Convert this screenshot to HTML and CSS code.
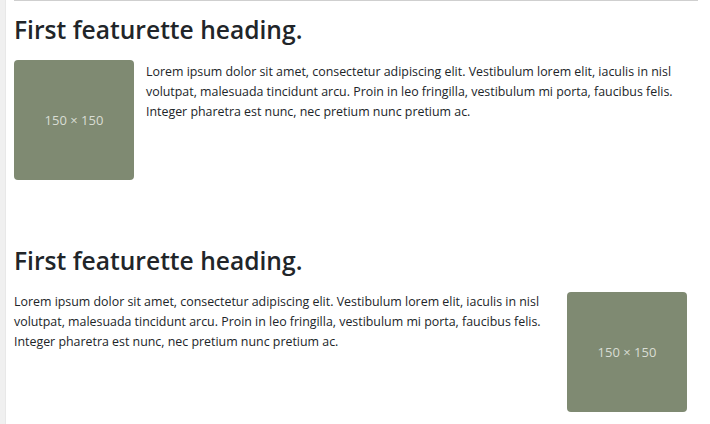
FILE: index.html
```html
<!DOCTYPE html>
<html>
<head>
<meta charset="utf-8">
<link rel="stylesheet" href="styles.css">
</head>
<body>
<div class="page">
  <hr class="divider">
  <section class="featurette">
    <h2 class="heading">First featurette heading.</h2>
    <div class="row">
      <div class="thumb">150 × 150</div>
      <p class="text">Lorem ipsum dolor sit amet, consectetur adipiscing elit. Vestibulum lorem elit, iaculis in nisl volutpat, malesuada tincidunt arcu. Proin in leo fringilla, vestibulum mi porta, faucibus felis. Integer pharetra est nunc, nec pretium nunc pretium ac.</p>
    </div>
  </section>
  <section class="featurette second">
    <h2 class="heading">First featurette heading.</h2>
    <div class="row right">
      <p class="text">Lorem ipsum dolor sit amet, consectetur adipiscing elit. Vestibulum lorem elit, iaculis in nisl volutpat, malesuada tincidunt arcu. Proin in leo fringilla, vestibulum mi porta, faucibus felis. Integer pharetra est nunc, nec pretium nunc pretium ac.</p>
      <div class="thumb">150 × 150</div>
    </div>
  </section>
</div>
</body>
</html>
```
FILE: styles.css
```css
html, body {
  margin: 0;
  padding: 0;
  background: #fff;
}
body {
  font-family: "Open Sans", "Noto Sans", sans-serif;
  color: #212529;
  width: 710px;
  height: 424px;
  overflow: hidden;
}
.page {
  border-left: 5px solid #f0f0f0;
  box-shadow: inset 1px 0 0 #e8e8e8;
  padding: 0 12px 0 9px;
  height: 424px;
  box-sizing: border-box;
}
.divider {
  margin: 0;
  border: 0;
  border-top: 1px solid #cfcfcf;
}
.featurette {
  display: flex;
  flex-direction: column;
}
.heading {
  margin: 14px 0 0;
  font-size: 24.6px;
  font-weight: 600;
  line-height: 30px;
}
.second .heading {
  margin-top: 66px;
}
.row {
  display: flex;
  gap: 12px;
  margin-top: 15px;
}
.row.right {
  justify-content: space-between;
  gap: 0;
  margin-top: 16px;
  padding-right: 11px;
}
.thumb {
  width: 120px;
  height: 120px;
  flex: none;
  background: #7f8a72;
  border-radius: 4px;
  color: #d9ddd4;
  font-size: 13px;
  display: flex;
  align-items: center;
  justify-content: center;
}
.text {
  margin: 2px 0 0;
  width: 548px;
  font-size: 12.4px;
  line-height: 20px;
}
.right .text {
  margin-top: 0;
}
```
